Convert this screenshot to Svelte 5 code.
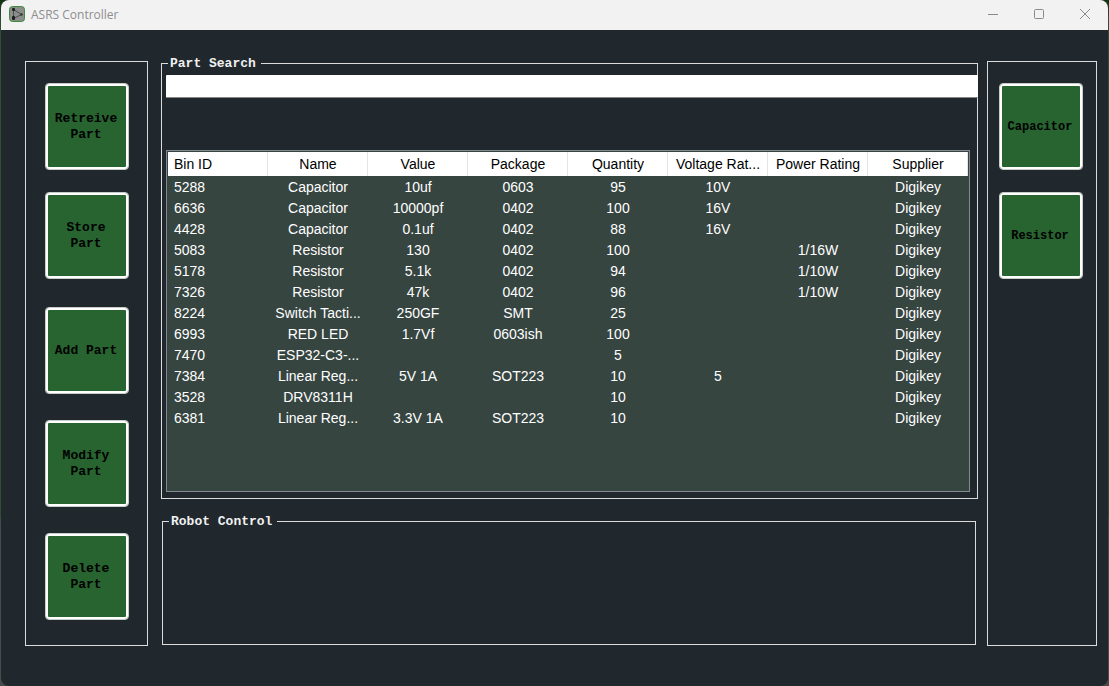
<script>
  const columns = [
    'Bin ID', 'Name', 'Value', 'Package', 'Quantity',
    'Voltage Rat...', 'Power Rating', 'Supplier'
  ];
  const parts = [
    ['5288', 'Capacitor', '10uf', '0603', '95', '10V', '', 'Digikey'],
    ['6636', 'Capacitor', '10000pf', '0402', '100', '16V', '', 'Digikey'],
    ['4428', 'Capacitor', '0.1uf', '0402', '88', '16V', '', 'Digikey'],
    ['5083', 'Resistor', '130', '0402', '100', '', '1/16W', 'Digikey'],
    ['5178', 'Resistor', '5.1k', '0402', '94', '', '1/10W', 'Digikey'],
    ['7326', 'Resistor', '47k', '0402', '96', '', '1/10W', 'Digikey'],
    ['8224', 'Switch Tacti...', '250GF', 'SMT', '25', '', '', 'Digikey'],
    ['6993', 'RED LED', '1.7Vf', '0603ish', '100', '', '', 'Digikey'],
    ['7470', 'ESP32-C3-...', '', '', '5', '', '', 'Digikey'],
    ['7384', 'Linear Reg...', '5V 1A', 'SOT223', '10', '5', '', 'Digikey'],
    ['3528', 'DRV8311H', '', '', '10', '', '', 'Digikey'],
    ['6381', 'Linear Reg...', '3.3V 1A', 'SOT223', '10', '', '', 'Digikey']
  ];
  const stockActions = ['Retreive Part', 'Store Part'];
  const editActions = ['Add Part', 'Modify Part', 'Delete Part'];
  const categories = ['Capacitor', 'Resistor'];
  let query = $state('');
</script>

<div class="desktop">
  <div class="window">
    <header class="titlebar">
      <svg class="logo" width="16" height="16" viewBox="0 0 16 16" aria-hidden="true">
        <rect x="0.5" y="0.5" width="15" height="15" rx="3" fill="#8b8d8b" stroke="#3d8a3d" />
        <path d="M4.5 3.5V12.5M4.5 3.5L12.5 8.5L4.5 12.5" fill="none" stroke="#4b4f4d" />
        <rect x="3" y="2" width="3" height="3" rx="1" fill="#1c201e" />
        <rect x="3" y="10" width="3" height="4" rx="1" fill="#1c201e" />
        <circle cx="12.5" cy="8.5" r="1.2" fill="#2c302e" />
      </svg>
      <h1>ASRS Controller</h1>
      <div class="controls">
        <button aria-label="Minimize">
          <svg width="12" height="12" viewBox="0 0 12 12"><path d="M1 6.5H11" /></svg>
        </button>
        <button aria-label="Maximize">
          <svg width="12" height="12" viewBox="0 0 12 12"><rect x="1.5" y="1.5" width="9" height="9" rx="1" /></svg>
        </button>
        <button aria-label="Close">
          <svg width="12" height="12" viewBox="0 0 12 12"><path d="M1 1L11 11M11 1L1 11" /></svg>
        </button>
      </div>
    </header>

    <main>
      <nav class="panel actions">
        <div class="stack">
          {#each stockActions as label}<button class="tile">{label}</button>{/each}
        </div>
        <div class="stack wide">
          {#each editActions as label}<button class="tile">{label}</button>{/each}
        </div>
      </nav>

      <div class="center">
        <fieldset class="search">
          <legend>Part Search</legend>
          <input type="text" aria-label="Part Search" bind:value={query} />
          <div class="list">
            <table>
              <thead>
                <tr>{#each columns as name}<th scope="col">{name}</th>{/each}</tr>
              </thead>
              <tbody>
                {#each parts as part}
                  <tr>{#each part as value}<td>{value}</td>{/each}</tr>
                {/each}
              </tbody>
            </table>
          </div>
        </fieldset>
        <fieldset class="robot">
          <legend>Robot Control</legend>
        </fieldset>
      </div>

      <nav class="panel categories">
        <div class="stack">
          {#each categories as label}<button class="tile small">{label}</button>{/each}
        </div>
      </nav>
    </main>
  </div>
</div>

<style>
  :global(body) {
    margin: 0;
  }
  .desktop {
    min-height: 100vh;
    box-sizing: border-box;
    display: flex;
    padding: 0 1px;
    background: linear-gradient(#10330f, #2f4f33 20px, #2f4f33 75%, #4a4a4a 76%);
  }
  .window {
    flex: 1;
    min-width: 0;
    display: flex;
    flex-direction: column;
    background: #20282d;
    border-radius: 8px;
    overflow: hidden;
  }
  .titlebar {
    display: flex;
    align-items: center;
    height: 30px;
    padding-left: 8px;
    background: #f2f2f2;
    color: #8e8e8e;
  }
  .logo {
    margin-bottom: 2px;
  }
  h1 {
    flex: 1;
    margin: 0 0 0 6px;
    font: 12px/16px "Open Sans", "Noto Sans", sans-serif;
  }
  .controls {
    display: flex;
    align-self: flex-start;
  }
  .controls button {
    width: 46px;
    height: 28px;
    padding: 0;
    border: 0;
    background: none;
    display: grid;
    place-items: center;
  }
  .controls svg {
    fill: none;
    stroke: #8a8a8a;
  }
  main {
    flex: 1;
    display: flex;
    padding: 26px 11px 40px 24px;
    font-family: "Courier New", "Liberation Mono", monospace;
  }
  .panel {
    box-sizing: border-box;
    margin-top: 5px;
    border: 1px solid #dcdcdc;
  }
  .actions {
    padding: 21px 18px 0 19px;
    margin-right: 13px;
    display: flex;
    flex-direction: column;
    gap: 28px;
  }
  .categories {
    padding: 21px 13px 0 11px;
    margin-left: 9px;
  }
  .stack {
    display: flex;
    flex-direction: column;
    gap: 22px;
  }
  .wide {
    gap: 26px;
  }
  .tile {
    box-sizing: border-box;
    width: 84px;
    height: 87px;
    padding: 0 6px 0 4px;
    border: 1px solid #c9cdca;
    border-radius: 4px;
    background: #276430;
    box-shadow: inset 0 0 0 2px #fff;
    color: #000;
    font: bold 13px/16px "Courier New", "Liberation Mono", monospace;
  }
  .small {
    font-size: 12px;
  }
  .center {
    flex: 1;
    min-width: 0;
    display: flex;
    flex-direction: column;
    gap: 15px;
    margin-bottom: 1px;
  }
  fieldset {
    box-sizing: border-box;
    min-width: 0;
    margin: 0;
    border: 1px solid #dcdcdc;
    color: #f0f0f0;
  }
  legend {
    padding: 0 5px 0 2px;
    font: bold 13px/15px "Courier New", "Liberation Mono", monospace;
  }
  .search {
    flex: 1;
    display: flex;
    flex-direction: column;
    padding: 4px 0 6px 4px;
  }
  .search legend {
    margin-left: 2px;
  }
  .search input {
    box-sizing: border-box;
    height: 23px;
    margin: 0 -1px 52px 0;
    padding: 0 6px;
    border: 0;
    border-bottom: 1px solid #868686;
    border-radius: 1px;
    background: #fff;
    font: 14px "Liberation Sans", Arial, sans-serif;
    outline: 0;
  }
  .list {
    flex: 1;
    margin-right: 7px;
    padding: 1px;
    border: 1px solid #828790;
    background: #374541;
  }
  table {
    width: 100%;
    table-layout: fixed;
    border-collapse: collapse;
    font: 14px/20px "Liberation Sans", Arial, sans-serif;
    color: #fff;
  }
  th,
  td {
    box-sizing: border-box;
    padding: 0;
    text-align: center;
    white-space: nowrap;
  }
  td {
    height: 21px;
    padding-top: 1px;
  }
  th {
    height: 24px;
    background: #fff;
    box-shadow: inset -1px 0 #e5e5e5;
    color: #000;
    font-weight: normal;
  }
  th:first-child,
  td:first-child {
    padding-left: 6px;
    text-align: left;
  }
  .robot {
    height: 131px;
    margin: 0 2px 0 1px;
    padding: 0 6px;
  }
</style>
